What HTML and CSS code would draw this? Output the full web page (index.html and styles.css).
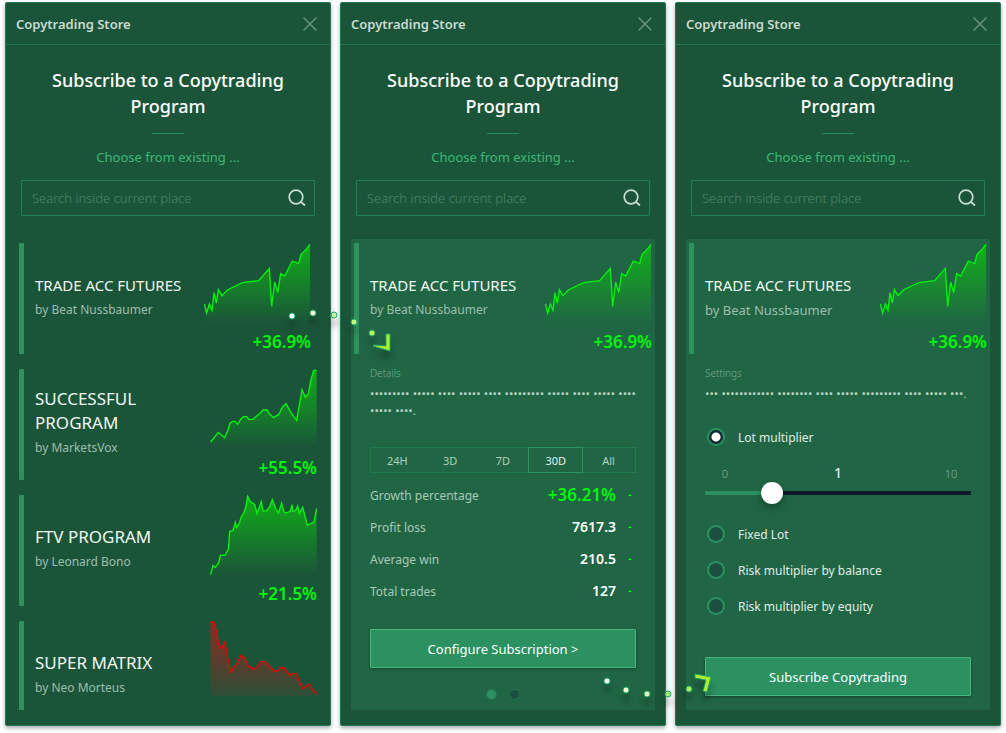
FILE: index.html
```html
<!DOCTYPE html>
<html lang="en">
<head>
  <meta charset="UTF-8">
  <meta name="viewport" content="width=device-width, initial-scale=1">
  <title>Copytrading Store</title>
  <link rel="stylesheet" href="styles.css">
</head>
<body>

  <!-- Shared icons and charts -->
  <svg class="defs" aria-hidden="true">
    <defs>
      <linearGradient id="fade-up" x1="0" y1="0" x2="0" y2="1">
        <stop offset="0" stop-color="#0ebe12" stop-opacity="0.85"/>
        <stop offset="1" stop-color="#0ebe12" stop-opacity="0"/>
      </linearGradient>
      <linearGradient id="fade-down" x1="0" y1="0" x2="0" y2="1">
        <stop offset="0" stop-color="#c01818" stop-opacity="0.7"/>
        <stop offset="1" stop-color="#c01818" stop-opacity="0.1"/>
      </linearGradient>
    </defs>
    <symbol id="icon-close" viewBox="0 0 14 14">
      <path d="M1 1L13 13M13 1L1 13" fill="none" stroke="currentColor" stroke-width="1.5" stroke-linecap="round"/>
    </symbol>
    <symbol id="icon-search" viewBox="0 0 18 18">
      <path d="M8 1.2a6.8 6.8 0 1 0 0 13.600a6.800 6.800 0 1 0 0-13.600zM13 13l3.500 3" fill="none" stroke="currentColor" stroke-width="1.700" stroke-linecap="round"/>
    </symbol>
    <symbol id="chart-futures" viewBox="0 0 321 243">
      <path fill="url(#fade-up)" d="M1 183L8 210 16 183 24 202 30 149 37 180 43 140 54 158 70 141 94 129 116 119 164 113 196 76 203 190 212 117 221 149 230 92 242 99 265 54 284 62 291 34 304 22 318 4V240H1z"/>
      <polyline class="line-up" points="1,183 8,210 16,183 24,202 30,149 37,180 43,140 54,158 70,141 94,129 116,119 164,113 196,76 203,190 212,117 221,149 230,92 242,99 265,54 284,62 291,34 304,22 318,4"/>
    </symbol>
  </svg>

  <main class="screens">

    <!-- Screen 1: program list -->
    <section class="panel">
      <header class="panel-header">
        <span class="panel-name">Copytrading Store</span>
        <button class="close" type="button" aria-label="Close"><svg><use href="#icon-close"/></svg></button>
      </header>
      <div class="intro">
        <h2>Subscribe to a Copytrading Program</h2>
        <p>Choose from existing ...</p>
      </div>
      <form class="search">
        <input type="text" placeholder="Search inside current place" aria-label="Search programs">
        <button type="submit" aria-label="Search"><svg><use href="#icon-search"/></svg></button>
      </form>
      <div class="content">
        <article class="program inset">
          <div class="program-text">
            <h3>TRADE ACC FUTURES</h3>
            <p>by Beat Nussbaumer</p>
          </div>
          <div class="program-result">
            <svg class="chart"><use href="#chart-futures"/></svg>
            <strong>+36.9%</strong>
          </div>
        </article>
        <article class="program large">
          <div class="program-text">
            <h3>SUCCESSFUL PROGRAM</h3>
            <p>by MarketsVox</p>
          </div>
          <div class="program-result">
            <svg class="chart" viewBox="0 0 321 243">
              <path fill="url(#fade-up)" d="M2 219L25 190 44 206 54 184 60 162 69 157 75 157 83 166 91 153 100 143 110 143 117 151 129 151 141 140 151 132 159 123 171 123 179 136 191 146 205 137 210 129 218 113 228 104 243 131 260 155 276 62 286 84 295 75 302 36 311 4 320 4V235H2z"/>
              <polyline class="line-up" points="2,219 25,190 44,206 54,184 60,162 69,157 75,157 83,166 91,153 100,143 110,143 117,151 129,151 141,140 151,132 159,123 171,123 179,136 191,146 205,137 210,129 218,113 228,104 243,131 260,155 276,62 286,84 295,75 302,36 311,4 320,4"/>
            </svg>
            <strong>+55.5%</strong>
          </div>
        </article>
        <article class="program large">
          <div class="program-text">
            <h3>FTV PROGRAM</h3>
            <p>by Leonard Bono</p>
          </div>
          <div class="program-result">
            <svg class="chart" viewBox="0 0 321 243">
              <path fill="url(#fade-up)" d="M2 239L9 211 16 217 26 204 31 181 45 181 55 163 59 109 69 107 76 82 80 97 88 84 94 65 102 52 108 33 113 3 120 19 134 28 141 56 154 20 159 48 169 47 178 37 187 14 197 40 205 54 215 25 222 51 229 54 241 48 246 29 249 49 257 46 263 33 268 56 278 37 292 90 312 81 320 40V239z"/>
              <polyline class="line-up" points="2,239 9,211 16,217 26,204 31,181 45,181 55,163 59,109 69,107 76,82 80,97 88,84 94,65 102,52 108,33 113,3 120,19 134,28 141,56 154,20 159,48 169,47 178,37 187,14 197,40 205,54 215,25 222,51 229,54 241,48 246,29 249,49 257,46 263,33 268,56 278,37 292,90 312,81 320,40"/>
            </svg>
            <strong>+21.5%</strong>
          </div>
        </article>
        <article class="program large">
          <div class="program-text">
            <h3>SUPER MATRIX</h3>
            <p>by Neo Morteus</p>
          </div>
          <div class="program-result">
            <svg class="chart" viewBox="0 0 321 243">
              <path fill="url(#fade-down)" d="M2 3L11 3 20 32 26 73 35 82 45 62 53 110 62 154 77 132 94 103 104 111 114 134 132 145 143 136 152 122 165 122 179 137 193 150 203 150 211 141 223 141 240 164 247 157 261 159 267 180 278 204 297 189 311 210 320 218V225H2z"/>
              <polyline class="line-down" points="2,3 11,3 20,32 26,73 35,82 45,62 53,110 62,154 77,132 94,103 104,111 114,134 132,145 143,136 152,122 165,122 179,137 193,150 203,150 211,141 223,141 240,164 247,157 261,159 267,180 278,204 297,189 311,210 320,218"/>
            </svg>
          </div>
        </article>
      </div>
    </section>

    <!-- Screen 2: program details -->
    <section class="panel">
      <header class="panel-header">
        <span class="panel-name">Copytrading Store</span>
        <button class="close" type="button" aria-label="Close"><svg><use href="#icon-close"/></svg></button>
      </header>
      <div class="intro">
        <h2>Subscribe to a Copytrading Program</h2>
        <p>Choose from existing ...</p>
      </div>
      <form class="search">
        <input type="text" placeholder="Search inside current place" aria-label="Search programs">
        <button type="submit" aria-label="Search"><svg><use href="#icon-search"/></svg></button>
      </form>
      <div class="content selected">
        <article class="program">
          <div class="program-text">
            <h3>TRADE ACC FUTURES</h3>
            <p>by Beat Nussbaumer</p>
          </div>
          <div class="program-result">
            <svg class="chart"><use href="#chart-futures"/></svg>
            <strong>+36.9%</strong>
          </div>
        </article>
        <div class="details">
          <h4>Details</h4>
          <p class="masked">••••••••• ••••• •••• ••••• •••• ••••••••• ••••• •••• ••••• •••• ••••• ••••.</p>
          <div class="periods">
            <button type="button">24H</button>
            <button type="button">3D</button>
            <button type="button">7D</button>
            <button type="button" class="active">30D</button>
            <button type="button">All</button>
          </div>
          <table class="stats">
            <tr class="growth"><th scope="row">Growth percentage</th><td>+36.21%</td><td class="trend"><i></i></td></tr>
            <tr><th scope="row">Profit loss</th><td>7617.3</td><td class="trend"><i></i></td></tr>
            <tr><th scope="row">Average win</th><td>210.5</td><td class="trend"><i></i></td></tr>
            <tr><th scope="row">Total trades</th><td>127</td><td class="trend"><i></i></td></tr>
          </table>
          <button class="primary" type="button">Configure Subscription &gt;</button>
          <div class="pager">
            <button type="button" class="current" aria-label="Page 1"></button>
            <button type="button" aria-label="Page 2"></button>
          </div>
        </div>
      </div>
      <svg class="trail trail-top" viewBox="0 0 120 60" aria-hidden="true">
        <circle cx="12" cy="16" r="3" fill="#ffffff"/>
        <circle cx="33" cy="13" r="3" fill="#f3ffdc"/>
        <circle cx="54" cy="15" r="3" fill="#c9f59a"/>
        <circle cx="74" cy="22" r="3" fill="#c4f780"/>
        <circle cx="92" cy="33" r="3" fill="#b8f55c"/>
        <path d="M93 46L110 51V34h-4V46L94 45z" fill="#adf02f"/>
      </svg>
    </section>

    <!-- Screen 3: subscription settings -->
    <section class="panel">
      <header class="panel-header">
        <span class="panel-name">Copytrading Store</span>
        <button class="close" type="button" aria-label="Close"><svg><use href="#icon-close"/></svg></button>
      </header>
      <div class="intro">
        <h2>Subscribe to a Copytrading Program</h2>
        <p>Choose from existing ...</p>
      </div>
      <form class="search">
        <input type="text" placeholder="Search inside current place" aria-label="Search programs">
        <button type="submit" aria-label="Search"><svg><use href="#icon-search"/></svg></button>
      </form>
      <div class="content selected">
        <article class="program">
          <div class="program-text wide">
            <h3>TRADE ACC FUTURES</h3>
            <p>by Beat Nussbaumer</p>
          </div>
          <div class="program-result">
            <svg class="chart"><use href="#chart-futures"/></svg>
            <strong>+36.9%</strong>
          </div>
        </article>
        <form class="details settings">
          <h4>Settings</h4>
          <p class="masked">••• •••••••••••• •••••••• •••• ••••• ••••••••• •••• ••••• •••.</p>
          <label class="option"><input type="radio" name="mode" checked> Lot multiplier</label>
          <div class="slider">
            <div class="scale"><span>0</span><output for="lot">1</output><span>10</span></div>
            <input type="range" id="lot" min="0" max="10" step="0.1" value="2.3" aria-label="Lot multiplier value">
          </div>
          <label class="option"><input type="radio" name="mode"> Fixed Lot</label>
          <label class="option"><input type="radio" name="mode"> Risk multiplier by balance</label>
          <label class="option"><input type="radio" name="mode"> Risk multiplier by equity</label>
          <button class="primary" type="button">Subscribe Copytrading</button>
        </form>
      </div>
      <svg class="trail trail-bottom" viewBox="0 0 120 60" aria-hidden="true">
        <circle cx="12" cy="20" r="3" fill="#ffffff"/>
        <circle cx="31" cy="29" r="3" fill="#f0ffd0"/>
        <circle cx="52" cy="33" r="3" fill="#dcfbbb"/>
        <circle cx="73" cy="33" r="3" fill="#a5e878"/>
        <circle cx="94" cy="28" r="3" fill="#a9f05c"/>
        <path d="M100 13L116 16L112 31L108 30L111 19L100 17z" fill="#adf02f"/>
      </svg>
    </section>

  </main>

</body>
</html>
```
FILE: styles.css
```css
* {
  box-sizing: border-box;
}

body {
  margin: 0;
  background: #fff;
  font-family: "Noto Sans", sans-serif;
  color: #fff;
}

h2, h3, h4, p {
  margin: 0;
  font-weight: 400;
}

button, input {
  font-family: inherit;
  color: inherit;
}

button {
  padding: 0;
  border: 0;
  background: none;
  cursor: pointer;
}

.defs {
  position: absolute;
  width: 0;
  height: 0;
}

.screens {
  display: grid;
  grid-template-columns: repeat(3, 1fr);
  gap: 9px;
  height: 100vh;
  padding: 2px 5px 7px 5px;
}

.panel {
  position: relative;
  display: flex;
  flex-direction: column;
  min-width: 0;
  min-height: 0;
  background: #1b5539;
  border: 1px solid #237a50;
  border-radius: 2px;
  box-shadow: 0 2px 4px rgba(0, 0, 0, 0.35);
}

.panel-header {
  display: flex;
  justify-content: space-between;
  align-items: center;
  height: 42px;
  flex: none;
  padding: 0 13px 0 10px;
  border-bottom: 1px solid #23774e;
}

.panel-name {
  font-size: 13px;
  font-weight: 600;
  color: #c9dbd1;
}

.close {
  display: flex;
  color: #64927b;
}

.close svg {
  width: 14px;
  height: 14px;
}

.intro {
  padding: 22px 32px 0;
  text-align: center;
}

.intro h2 {
  font-size: 18px;
  font-weight: 500;
  line-height: 26px;
}

.intro h2::after {
  content: "";
  display: block;
  width: 32px;
  height: 1px;
  margin: 14px auto 0;
  background: #2b8a5b;
}

.intro p {
  margin-top: 13px;
  font-size: 13px;
  line-height: 20px;
  color: #3cb878;
}

.search {
  display: flex;
  align-items: center;
  flex: none;
  height: 36px;
  margin: 13px 15px 23px;
  padding: 0 8px 0 10px;
  border: 1px solid #238052;
  border-radius: 1px;
}

.search input {
  flex: 1;
  min-width: 0;
  padding: 0;
  border: 0;
  outline: 0;
  background: none;
  font-size: 13px;
  font-weight: 300;
}

.search input::placeholder {
  color: #4c8467;
}

.search button {
  display: flex;
  color: #c9dbd1;
}

.search svg {
  width: 18px;
  height: 18px;
}

/* Programs */
.content {
  flex: 1;
  min-height: 0;
  margin: 0 10px 15px;
  padding: 4px 3px 0 3px;
  border-radius: 2px 2px 0 0;
  overflow: hidden;
}

.content.selected {
  background: #206644;
}

.program {
  display: flex;
  height: 111px;
  margin-bottom: 15px;
  border-left: 5px solid #2e9260;
  border-radius: 1px;
}

.program.inset {
  padding-right: 6px;
}

.program-text {
  display: flex;
  flex-direction: column;
  justify-content: center;
  flex: 1;
  min-width: 0;
  padding: 0 0 6px 11px;
}

.program-text h3 {
  font-size: 15px;
  line-height: 24px;
  white-space: nowrap;
  color: #f1f6f3;
}

.program.large h3 {
  font-size: 17px;
  white-space: normal;
}

.program-text p {
  margin-top: 4px;
  font-size: 12px;
  line-height: 18px;
  color: #9dbdac;
}

.program-text.wide p {
  font-size: 13px;
}

.program-result {
  flex: none;
  width: 107px;
  text-align: right;
}

.chart {
  display: block;
  width: 107px;
  height: 81px;
}

.line-up, .line-down {
  fill: none;
  stroke: #00f60a;
  stroke-width: 4;
}

.line-down {
  stroke: #f00000;
}

.program-result strong {
  display: block;
  margin-top: 6px;
  font-size: 17px;
  font-weight: 600;
  line-height: 24px;
  color: #00f60a;
}

/* Details and settings */
.details {
  padding: 0 16px;
}

.details h4 {
  font-size: 10px;
  font-weight: 300;
  line-height: 14px;
  margin-top: -3px;
  color: #7ba78f;
}

.masked {
  margin: 5px 0 28px;
  font-family: Roboto, sans-serif;
  font-size: 13px;
  line-height: 17px;
  color: #b8d0c3;
}

.periods {
  display: grid;
  grid-template-columns: repeat(5, 1fr);
  height: 26px;
  border: 1px solid #247a4f;
}

.periods button {
  margin: -1px;
  border: 1px solid transparent;
  font-size: 11px;
  color: #b3cdbf;
}

.periods .active {
  border-color: #2d9362;
  color: #e4eee8;
}

.stats {
  width: 100%;
  margin-top: 6px;
  border-collapse: collapse;
}

.stats th, .stats td {
  height: 32px;
  padding: 0;
}

.stats th {
  font-size: 12px;
  font-weight: 400;
  text-align: left;
  color: #abc8b8;
}

.stats td {
  font-size: 14px;
  font-weight: 600;
  line-height: 20px;
  text-align: right;
}

.stats .growth td {
  font-size: 17px;
  color: #00f60a;
}

.stats .trend {
  width: 20px;
}

.trend i {
  display: block;
  width: 4px;
  margin: 0 4px 0 auto;
  border: 2px solid transparent;
  border-top: 0;
  border-bottom-color: #00f60a;
}

.primary {
  display: block;
  width: 100%;
  height: 39px;
  margin-top: 22px;
  border: 1px solid #45b77e;
  border-radius: 1px;
  background: #2b9160;
  box-shadow: 0 1px 3px rgba(0, 0, 0, 0.35);
  font-size: 13px;
}

.pager {
  display: flex;
  justify-content: center;
  gap: 12px;
  margin-top: 21px;
}

.pager button {
  width: 11px;
  height: 11px;
  border: 1px solid #237550;
  border-radius: 50%;
  background: #1b5040;
}

.pager .current {
  background: #2b9160;
}

.settings .masked {
  margin-bottom: 26px;
}

.option {
  display: flex;
  align-items: center;
  gap: 13px;
  height: 18px;
  margin-bottom: 18px;
  padding-left: 2px;
  font-size: 12px;
  color: #e0ebe5;
}

.option input {
  appearance: none;
  width: 18px;
  height: 18px;
  margin: 0;
  border: 2px solid #2b9160;
  border-radius: 50%;
  background: #1b5040;
}

.option input:checked {
  background: radial-gradient(circle, #fff 4px, #102b33 5px);
}

.scale {
  display: grid;
  grid-template-columns: 40px 1fr 40px;
  align-items: center;
  height: 18px;
  text-align: center;
  font-size: 11px;
  font-weight: 300;
  color: #8db39f;
}

.scale output {
  font-size: 14px;
  font-weight: 500;
  line-height: 18px;
  color: #e0ebe5;
}

.slider {
  margin-bottom: 21px;
}

.slider input {
  appearance: none;
  display: block;
  width: 100%;
  height: 22px;
  margin: 0;
  background: linear-gradient(90deg, #2b9160 25%, #0c1a2c 25%) center / 100% 4px no-repeat;
}

.slider input::-webkit-slider-thumb {
  appearance: none;
  width: 22px;
  height: 22px;
  border-radius: 50%;
  background: #fff;
  box-shadow: 0 4px 8px rgba(0, 0, 0, 0.3);
}

.settings .primary {
  margin-top: 42px;
}

/* Step arrows between the screens */
.trail {
  position: absolute;
  z-index: 1;
  width: 120px;
  height: 60px;
  pointer-events: none;
  overflow: visible;
  stroke: #22a566;
  stroke-width: 1;
  filter: drop-shadow(0 8px 3px rgba(0, 0, 0, 0.3));
}

.trail-top {
  left: -61px;
  top: 297px;
}

.trail-bottom {
  left: -81px;
  bottom: 4px;
}
```
